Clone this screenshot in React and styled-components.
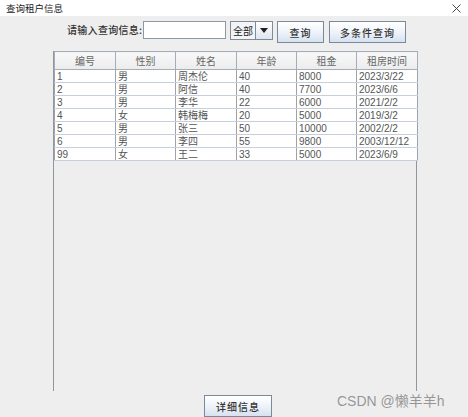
import styled, { createGlobalStyle } from 'styled-components';

const GlobalStyle = createGlobalStyle`
	html, body {
		margin: 0;
		padding: 0;
		background: #eeeeee;
	}
	body {
		font-family: 'Liberation Sans', 'Noto Sans CJK SC', sans-serif;
	}
`;

const tenants = [
	{ id: '1', sex: '男', name: '周杰伦', age: '40', rent: '8000', date: '2023/3/22' },
	{ id: '2', sex: '男', name: '阿信', age: '40', rent: '7700', date: '2023/6/6' },
	{ id: '3', sex: '男', name: '李华', age: '22', rent: '6000', date: '2021/2/2' },
	{ id: '4', sex: '女', name: '韩梅梅', age: '20', rent: '5000', date: '2019/3/2' },
	{ id: '5', sex: '男', name: '张三', age: '50', rent: '10000', date: '2002/2/2' },
	{ id: '6', sex: '男', name: '李四', age: '55', rent: '9800', date: '2003/12/12' },
	{ id: '99', sex: '女', name: '王二', age: '33', rent: '5000', date: '2023/6/9' },
];

const columns = ['编号', '性别', '姓名', '年龄', '租金', '租房时间'];
const widths = [61, 60, 61, 60, 60, 61];

const CloseIcon = () => (
	<svg width="9" height="9" viewBox="0 0 9 9">
		<path d="M0.5 0.5 L8.5 8.5 M8.5 0.5 L0.5 8.5" stroke="#444" strokeWidth="1" fill="none" />
	</svg>
);

const App = () => {
	return (
		<>
			<GlobalStyle />
			<Window>
				<TitleBar>
					<Title>查询租户信息</Title>
					<CloseButton>
						<CloseIcon />
					</CloseButton>
				</TitleBar>
				<Content>
					<Toolbar>
						<Label>请输入查询信息:</Label>
						<TextField />
						<Combo>
							<ComboValue>全部</ComboValue>
							<ComboArrow>
								<svg width="8" height="5" viewBox="0 0 8 5">
									<path d="M0 0 L8 0 L4 5 Z" fill="#222" />
								</svg>
							</ComboArrow>
						</Combo>
						<Button width={47}>查询</Button>
						<Button width={77} gap={5}>多条件查询</Button>
					</Toolbar>
					<ScrollPane>
						<Table>
							<colgroup>
								{widths.map((w, i) => (
									<col key={i} style={{ width: w }} />
								))}
							</colgroup>
							<thead>
								<tr>
									{columns.map(c => (
										<HeadCell key={c}>{c}</HeadCell>
									))}
								</tr>
							</thead>
							<tbody>
								{tenants.map(t => (
									<Row key={t.id}>
										<Cell>{t.id}</Cell>
										<Cell>{t.sex}</Cell>
										<Cell>{t.name}</Cell>
										<Cell>{t.age}</Cell>
										<Cell>{t.rent}</Cell>
										<Cell>{t.date}</Cell>
									</Row>
								))}
							</tbody>
						</Table>
					</ScrollPane>
					<Footer>
						<Button width={68} height={22}>详细信息</Button>
					</Footer>
				</Content>
				<Watermark>CSDN @懒羊羊h</Watermark>
			</Window>
		</>
	);
};

export default App;

const Window = styled.div`
	position: relative;
	width: 468px;
	height: 417px;
	overflow: hidden;
	display: flex;
	flex-direction: column;
	background: #eeeeee;
`;

const TitleBar = styled.div`
	height: 17px;
	background: #ffffff;
	display: flex;
	align-items: center;
	justify-content: space-between;
	padding: 0 7px 0 6px;
`;

const Title = styled.span`
	font-family: 'Noto Sans CJK SC', sans-serif;
	font-size: 9.5px;
	color: #222;
	line-height: 12px;
`;

const CloseButton = styled.span`
	display: flex;
`;

const Content = styled.div`
	flex: 1;
	display: flex;
	flex-direction: column;
`;

const Toolbar = styled.div`
	display: flex;
	align-items: flex-start;
	margin-top: 5px;
	padding-left: 67px;
	height: 22px;
`;

const Label = styled.span`
	font-family: 'Noto Sans CJK SC', sans-serif;
	font-size: 10px;
	font-weight: 500;
	color: #333;
	line-height: 18px;
	width: 76px;
	letter-spacing: 0.3px;
`;

const TextField = styled.div`
	width: 81px;
	height: 16px;
	background: #ffffff;
	border: 1px solid #8e99a8;
`;

const Combo = styled.div`
	display: flex;
	margin-left: 4px;
	width: 43px;
	height: 19px;
	border: 1px solid #7f8b99;
	box-sizing: border-box;
	background: #eeeeee;
`;

const ComboValue = styled.span`
	flex: 1;
	font-family: 'Noto Sans CJK SC', sans-serif;
	font-size: 10px;
	color: #222;
	line-height: 17px;
	padding-left: 2px;
	border-right: 1px solid #7f8b99;
	background: #f2f4f7;
`;

const ComboArrow = styled.span`
	width: 16px;
	display: flex;
	align-items: center;
	justify-content: center;
	background: linear-gradient(#ffffff, #dfe6ef);
`;

const Button = styled.div`
	box-sizing: border-box;
	width: ${p => p.width}px;
	height: ${p => p.height || 22}px;
	margin-left: ${p => (p.gap === undefined ? 4 : p.gap)}px;
	border: 1px solid #7a8a9c;
	background: linear-gradient(#ffffff 0%, #f1f5fa 45%, #d6e2f0 100%);
	display: flex;
	align-items: center;
	justify-content: center;
	font-family: 'Noto Sans CJK SC', sans-serif;
	font-size: 10px;
	font-weight: 500;
	color: #333;
	letter-spacing: 1px;
`;

const ScrollPane = styled.div`
	margin: 8px 0 0 53px;
	width: 364px;
	height: 340px;
	box-sizing: border-box;
	border-left: 1px solid #8f969e;
	border-right: 1px solid #8f969e;
`;

const Table = styled.table`
	border-collapse: collapse;
	table-layout: fixed;
	width: 362px;
	font-size: 10px;
`;

const HeadCell = styled.th`
	height: 17px;
	padding: 0;
	font-family: 'Noto Sans CJK SC', sans-serif;
	font-weight: 400;
	font-size: 10px;
	color: #666;
	text-align: center;
	background: linear-gradient(#f8f8f8, #ececec);
	border: 1px solid #a5adb9;
`;

const Row = styled.tr`
	height: 13px;
	background: #ffffff;
`;

const Cell = styled.td`
	padding: 0 0 0 2px;
	line-height: 11px;
	color: #555;
	font-family: 'Liberation Sans', 'Noto Sans CJK SC', sans-serif;
	font-size: 10px;
	white-space: nowrap;
	border-top: 1px solid #c7cfdc;
	border-bottom: 1px solid #c7cfdc;
	border-left: 1px solid #9aa3ae;
	border-right: 1px solid #9aa3ae;
`;

const Footer = styled.div`
	display: flex;
	justify-content: center;
	padding: 4px 0 0 4px;
`;

const Watermark = styled.span`
	position: absolute;
	left: 337px;
	top: 390px;
	font-family: 'Liberation Sans', 'Noto Sans CJK SC', sans-serif;
	font-size: 14px;
	color: rgba(120, 120, 120, 0.75);
	white-space: nowrap;
`;
